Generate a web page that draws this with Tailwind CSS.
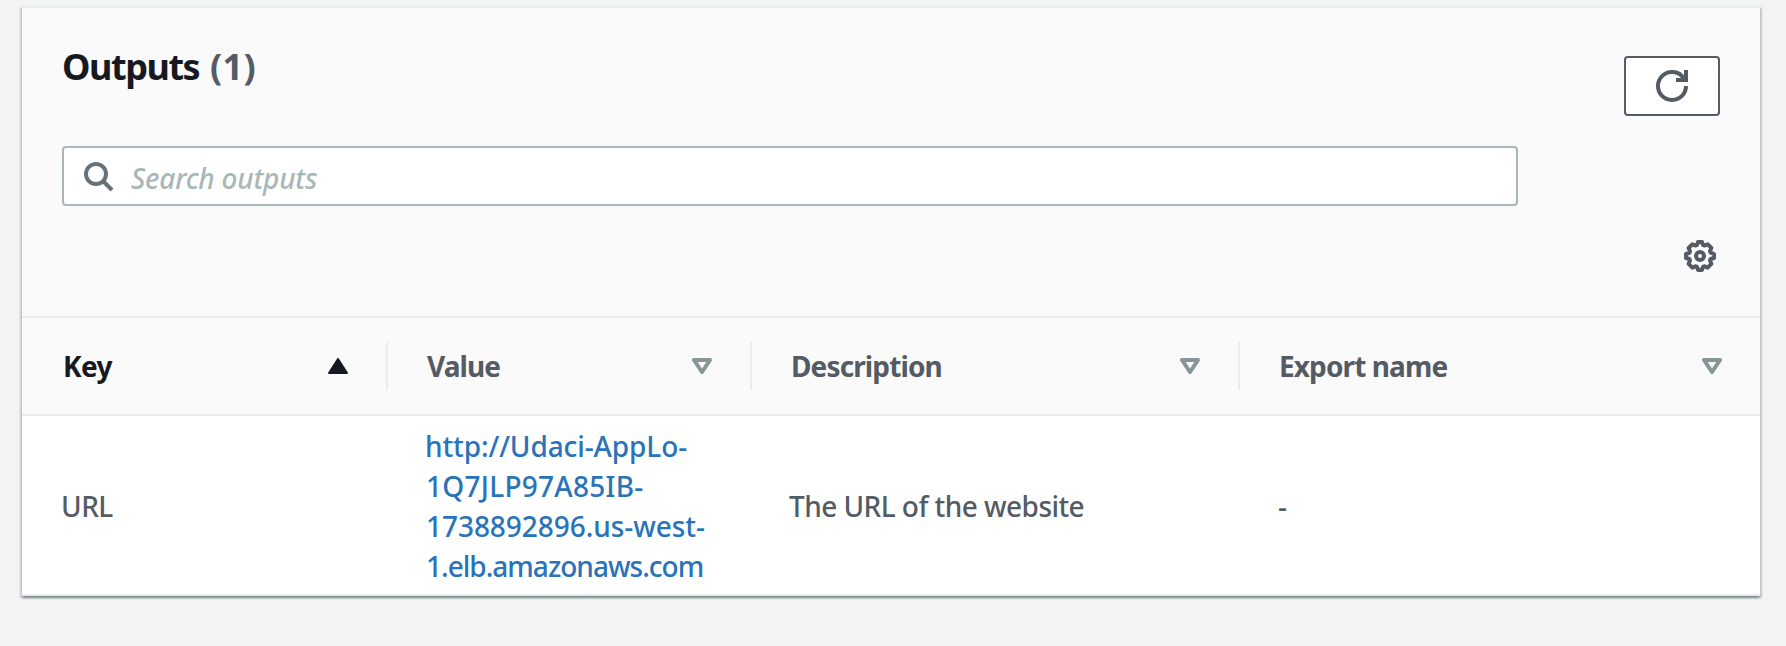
<!DOCTYPE html>
<html lang="en">
<head>
<meta charset="utf-8">
<title>Outputs</title>
<script src="https://cdn.jsdelivr.net/npm/@tailwindcss/browser@4"></script>
</head>
<body class="h-[646px] overflow-hidden bg-[#f2f3f3] pt-[6px] pl-[22px] font-['Noto_Sans',sans-serif] text-[28px] leading-[40px] font-medium text-[#545b64]">
<section class="h-[590px] w-[1738px] border-t-2 border-[#eaeded] bg-white shadow-[0_2px_2px_0_rgba(0,28,36,0.3),2px_2px_2px_0_rgba(0,28,36,0.15),-2px_2px_2px_0_rgba(0,28,36,0.15)]">
  <header class="h-[310px] border-b-2 border-[#eaeded] bg-[#fafafa] px-10">
    <div class="flex h-[138px] items-start justify-between">
      <h2 class="flex pt-[37px] text-[36px] leading-[44px] font-bold">
        <span class="w-[148px] tracking-[-1.45px] text-[#16191f]">Outputs</span>
        <span class="tracking-[0.3px]">(1)</span>
      </h2>
      <button class="mt-[48px] flex h-[60px] w-[96px] items-center justify-center rounded-[4px] border-2 border-[#545b64] bg-white" aria-label="Refresh">
        <svg class="size-8" viewBox="0 0 16 16" fill="none" stroke="#545b64" stroke-width="2"><path d="M10 5h5V0"/><path d="M15 8a6.957 6.957 0 0 1-7 7 6.957 6.957 0 0 1-7-7 6.957 6.957 0 0 1 7-7 6.870 6.870 0 0 1 6.300 4"/></svg>
      </button>
    </div>
    <div class="flex h-[60px] w-[1456px] items-center rounded-[4px] border-2 border-[#aab7b8] bg-white pl-[18px]">
      <svg class="mr-[17px] size-8 shrink-0" viewBox="0 0 32 32" fill="none" stroke="#687078" stroke-width="4"><circle cx="14" cy="14" r="10"/><path d="M21 21l9 9"/></svg>
      <span class="pt-[3px] tracking-[-0.25px] text-[#aab7b8] italic">Search outputs</span>
    </div>
    <div class="flex justify-end pt-[34px] pr-1">
      <svg class="size-8" viewBox="0 0 16 16" fill="none" stroke="#545b64" stroke-width="2" stroke-linejoin="round"><path d="M7 1h2l.5 1.500.8.300 1.500-.7 1.900 1.900-.7 1.500.300.8L15 7v2l-1.700.5-.300.8.7 1.600-1.900 1.900-1.500-.7-.8.300L9 15H7l-.5-1.600-.8-.300-1.500.7-1.900-1.900.7-1.600-.300-.8L1 9V7l1.700-.6.300-.8L2.300 4l1.900-1.900 1.500.7.8-.300z"/><circle cx="8" cy="8" r="2"/></svg>
    </div>
  </header>

  <div class="grid h-[98px] grid-cols-[366px_364px_488px_520px] items-center border-b-2 border-[#eaeded] bg-[#fafafa] font-bold">
    <div class="flex h-12 items-center justify-between border-r-2 border-[#eaeded] pr-[38px] pl-[41px] text-[#16191f]">
      <span class="tracking-[-0.6px]">Key</span>
      <svg class="h-4 w-5" viewBox="0 0 20 16" fill="#16191f" stroke="#16191f" stroke-width="2" stroke-linejoin="round"><path d="M10 1l9 14H1z"/></svg>
    </div>
    <div class="flex h-12 items-center justify-between border-r-2 border-[#eaeded] pr-[38px] pl-[39px]">
      <span class="tracking-[-0.9px]">Value</span>
      <svg class="h-4 w-5" viewBox="0 0 20 16" fill="none" stroke="#879596" stroke-width="4" stroke-linejoin="round"><path d="M2 2h16l-8 12z"/></svg>
    </div>
    <div class="flex h-12 items-center justify-between border-r-2 border-[#eaeded] pr-[38px] pl-[39px]">
      <span class="tracking-[-0.88px]">Description</span>
      <svg class="h-4 w-5" viewBox="0 0 20 16" fill="none" stroke="#879596" stroke-width="4" stroke-linejoin="round"><path d="M2 2h16l-8 12z"/></svg>
    </div>
    <div class="flex h-12 items-center justify-between pr-[38px] pl-[39px]">
      <span class="tracking-[-0.89px]">Export name</span>
      <svg class="h-4 w-5" viewBox="0 0 20 16" fill="none" stroke="#879596" stroke-width="4" stroke-linejoin="round"><path d="M2 2h16l-8 12z"/></svg>
    </div>
  </div>

  <div class="grid h-[180px] grid-cols-[366px_364px_488px_520px] items-center border-b-2 border-[#eaeded] pt-[2px]">
    <div class="pl-[39px] tracking-[-0.5px]">URL</div>
    <a class="flex flex-col pl-[37px] whitespace-nowrap text-[#2a73b8]">
      <span class="tracking-[-0.1px]">http://Udaci-AppLo-</span>
      <span class="pl-px tracking-[0.27px]">1Q7JLP97A85IB-</span>
      <span class="pl-px tracking-[-0.05px]">1738892896.us-west-</span>
      <span class="pl-px tracking-[-0.99px]">1.elb.amazonaws.com</span>
    </a>
    <div class="pl-[37px] tracking-[-0.55px]">The URL of the website</div>
    <div class="pl-[38px]">-</div>
  </div>
</section>
</body>
</html>
